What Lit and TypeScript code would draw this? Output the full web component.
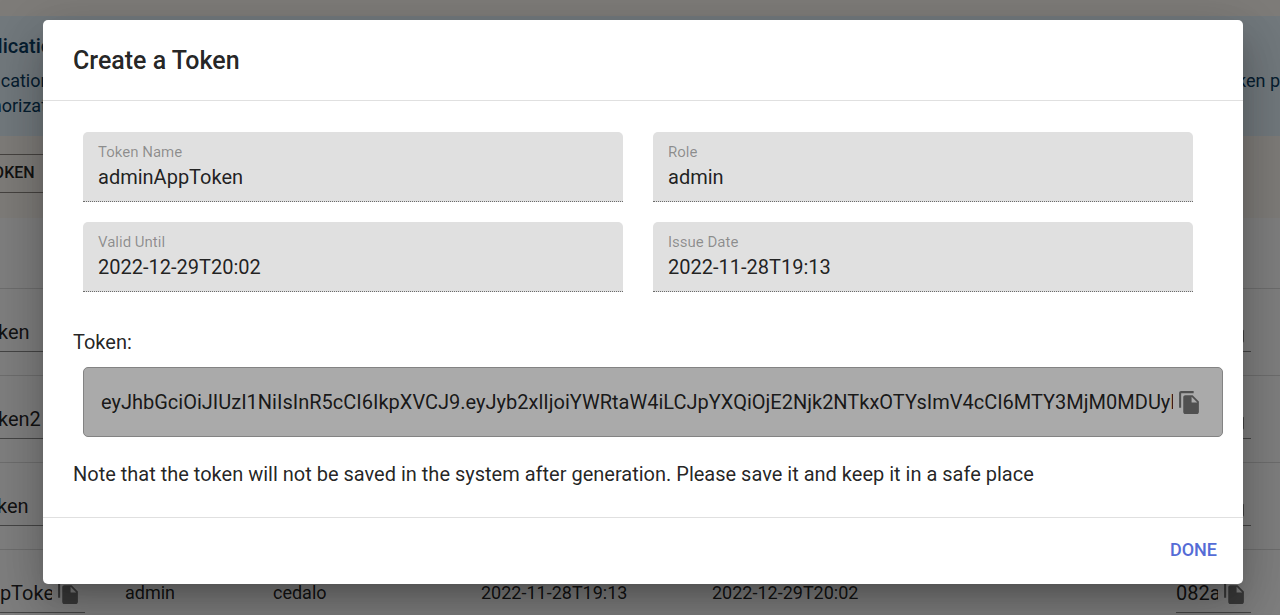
import { LitElement, html, css, svg } from "lit";
import { customElement, property } from "lit/decorators.js";

const copyIcon = svg`<path d="M16 1H4c-1.1 0-2 .9-2 2v14h2V3h12V1zm-1 4l6 6v10c0 1.1-.9 2-1.99 2H7.99C6.89 23 6 22.1 6 21V7c0-1.1.89-2 1.99-2h7zm-1 7h5.5L14 6.5V12z"/>`;

interface TokenRow {
  name: string;
  role: string;
  user: string;
  issued: string;
  until: string;
  hash: string;
}

const ROWS: TokenRow[] = [
  { name: "adminToken", role: "admin", user: "cedalo", issued: "2022-11-28T18:40", until: "2022-12-29T20:02", hash: "5d1c07be" },
  { name: "adminToken2", role: "admin", user: "cedalo", issued: "2022-11-28T18:52", until: "2022-12-29T20:02", hash: "c93fa214" },
  { name: "nodesToken", role: "admin", user: "cedalo", issued: "2022-11-28T19:05", until: "2022-12-29T20:02", hash: "71be90d3" },
  { name: "adminAppToken", role: "admin", user: "cedalo", issued: "2022-11-28T19:13", until: "2022-12-29T20:02", hash: "082ae6f1" },
];

const TOKEN =
  "eyJhbGciOiJIUzI1NiIsInR5cCI6IkpXVCJ9.eyJyb2xlIjoiYWRtaW4iLCJpYXQiOjE2Njk2NTkxOTYsImV4cCI6MTY3MjM0MDUyMH0";

@customElement("copy-field")
class CopyField extends LitElement {
  @property() value = "";
  @property() label = "";

  static styles = css`
    :host {
      display: block;
    }
    .field {
      display: flex;
      align-items: center;
      gap: 4px;
      height: 38px;
      padding-right: 4px;
      border-bottom: 1px solid #8a8a8a;
    }
    .value {
      flex: 1;
      min-width: 0;
      padding: 0;
      border: 0;
      outline: 0;
      background: none;
      color: rgba(0, 0, 0, 0.87);
      font: 400 20px/24px Roboto, sans-serif;
    }
    .copy {
      display: flex;
      padding: 0;
      border: 0;
      background: none;
      cursor: pointer;
    }
    .icon {
      width: 25px;
      height: 25px;
      fill: #757575;
    }
  `;

  render() {
    return html`<div class="field">
      <input class="value" aria-label=${this.label} readonly .value=${this.value} />
      <button class="copy" aria-label="Copy">
        <svg class="icon" viewBox="0 0 24 24">${copyIcon}</svg>
      </button>
    </div>`;
  }
}

@customElement("token-page")
class TokenPage extends LitElement {
  static styles = css`
    :host {
      display: block;
      font-family: Roboto, sans-serif;
      color: rgba(0, 0, 0, 0.87);
    }
    /* The page is scrolled sideways, so its left part lies outside the window. */
    .scrolled {
      margin-left: -100px;
      padding-top: 16px;
    }
    .alert {
      box-sizing: border-box;
      height: 120px;
      padding: 17px 0 0 60px;
      background: #e5f3fb;
      color: #0d3c61;
      white-space: nowrap;
    }
    .alert-title {
      margin: 0 0 9px;
      padding-left: 2px;
      font-size: 20px;
      font-weight: 500;
      line-height: 26px;
    }
    .line {
      display: flex;
      justify-content: space-between;
      font-size: 18px;
      line-height: 25px;
    }
    .create {
      display: block;
      width: 180px;
      height: 39px;
      margin: 18px 0 25px 10px;
      padding: 0 11px 2px;
      border: 1px solid #8c8681;
      border-radius: 5px;
      background: none;
      color: rgba(0, 0, 0, 0.87);
      font: 500 16px/20px Roboto, sans-serif;
      text-align: left;
    }
    .table {
      width: 100%;
      table-layout: fixed;
      border-collapse: separate;
      border-spacing: 0;
      background: #fff;
      font-size: 18px;
      line-height: 24px;
    }
    .head,
    .cell {
      box-sizing: border-box;
      padding: 0 20px;
      text-align: left;
      border-bottom: 1px solid #dcdcdc;
    }
    .cell {
      height: 87px;
    }
    .head {
      height: 71px;
    }
    .cell.token {
      padding-right: 29px;
    }
    .w-name {
      width: 205px;
    }
    .w-role {
      width: 148px;
    }
    .w-user {
      width: 208px;
    }
    .w-issued {
      width: 231px;
    }
    .w-token {
      width: 124px;
    }
  `;

  render() {
    return html`<div class="scrolled">
      <section class="alert">
        <h2 class="alert-title">Application Tokens</h2>
        <div class="line"><span>Application tokens</span><span>token p</span></div>
        <div class="line"><span>(authorization)</span></div>
      </section>
      <button class="create">CREATE TOKEN</button>
      <table class="table">
        <thead>
          <tr>
            <th class="head w-name"></th>
            <th class="head w-role"></th>
            <th class="head w-user"></th>
            <th class="head w-issued"></th>
            <th class="head"></th>
            <th class="head w-token"></th>
          </tr>
        </thead>
        <tbody>
          ${ROWS.map(
            (r) => html`<tr>
              <td class="cell"><copy-field label="Name" .value=${r.name}></copy-field></td>
              <td class="cell">${r.role}</td>
              <td class="cell">${r.user}</td>
              <td class="cell">${r.issued}</td>
              <td class="cell">${r.until}</td>
              <td class="cell token"><copy-field label="Token" .value=${r.hash}></copy-field></td>
            </tr>`
          )}
        </tbody>
      </table>
    </div>`;
  }
}

@customElement("token-dialog")
class TokenDialog extends LitElement {
  static styles = css`
    :host {
      display: block;
      font-family: Roboto, sans-serif;
      color: rgba(0, 0, 0, 0.87);
    }
    .dialog {
      border-radius: 5px;
      background: #fff;
      box-shadow: 0 14px 19px -9px rgba(0, 0, 0, 0.2), 0 30px 48px 4px rgba(0, 0, 0, 0.14),
        0 11px 58px 10px rgba(0, 0, 0, 0.12);
    }
    .title {
      margin: 0;
      padding: 21px 30px 19px;
      font-size: 25px;
      font-weight: 500;
      line-height: 40px;
    }
    .content {
      padding: 31px 20px 28px 30px;
      border-top: 1px solid #e0e0e0;
      border-bottom: 1px solid #e0e0e0;
    }
    .grid {
      display: grid;
      grid-template-columns: 1fr 1fr;
      gap: 20px 30px;
      margin: 0 30px 35px 10px;
    }
    .field {
      display: flex;
      flex-direction: column;
      box-sizing: border-box;
      height: 70px;
      padding: 10px 15px 0;
      border-bottom: 1px dotted #6b6b6b;
      border-radius: 5px 5px 0 0;
      background: #e0e0e0;
    }
    .label {
      color: rgba(0, 0, 0, 0.38);
      font-size: 15px;
      line-height: 20px;
    }
    .value {
      width: 100%;
      padding: 0;
      border: 0;
      outline: 0;
      background: none;
      color: rgba(0, 0, 0, 0.87);
      font: 400 20px/30px Roboto, sans-serif;
    }
    .text {
      display: block;
      font-size: 20px;
      line-height: 30px;
    }
    .token {
      display: flex;
      align-items: center;
      gap: 4px;
      box-sizing: border-box;
      height: 70px;
      margin: 10px 0 22px 10px;
      padding: 0 20px 0 17px;
      border: 1px solid #838383;
      border-radius: 5px;
      background: #aaa;
    }
    .copy {
      display: flex;
      padding: 0;
      border: 0;
      background: none;
      cursor: pointer;
    }
    .icon {
      width: 25px;
      height: 25px;
      fill: #505050;
    }
    .note {
      margin: 0;
    }
    .actions {
      display: flex;
      justify-content: flex-end;
      padding: 9px 10px 11px;
    }
    .done {
      padding: 8px 16px;
      border: 0;
      border-radius: 5px;
      background: none;
      color: #556cd6;
      font: 500 18px/30px Roboto, sans-serif;
      cursor: pointer;
    }
  `;

  private field(id: string, label: string, value: string) {
    return html`<div class="field">
      <label class="label" for=${id}>${label}</label>
      <input class="value" id=${id} disabled .value=${value} />
    </div>`;
  }

  render() {
    return html`<div class="dialog" role="dialog" aria-labelledby="title">
      <h2 class="title" id="title">Create a Token</h2>
      <div class="content">
        <div class="grid">
          ${this.field("name", "Token Name", "adminAppToken")}
          ${this.field("role", "Role", "admin")}
          ${this.field("until", "Valid Until", "2022-12-29T20:02")}
          ${this.field("issued", "Issue Date", "2022-11-28T19:13")}
        </div>
        <label class="text" for="token">Token:</label>
        <div class="token">
          <input class="value" id="token" readonly .value=${TOKEN} />
          <button class="copy" aria-label="Copy token">
            <svg class="icon" viewBox="0 0 24 24">${copyIcon}</svg>
          </button>
        </div>
        <p class="text note">
          Note that the token will not be saved in the system after generation. Please save it and keep it in a safe place
        </p>
      </div>
      <div class="actions"><button class="done">DONE</button></div>
    </div>`;
  }
}

@customElement("app-root")
class AppRoot extends LitElement {
  static styles = css`
    :host {
      display: block;
      position: relative;
      height: 100vh;
      overflow: hidden;
      background: #fdf8f3;
    }
    .overlay {
      position: absolute;
      inset: 0;
      padding: 20px 37px 31px 43px;
      background: rgba(0, 0, 0, 0.5);
    }
  `;

  render() {
    return html`<token-page></token-page>
      <div class="overlay"><token-dialog></token-dialog></div>`;
  }
}
